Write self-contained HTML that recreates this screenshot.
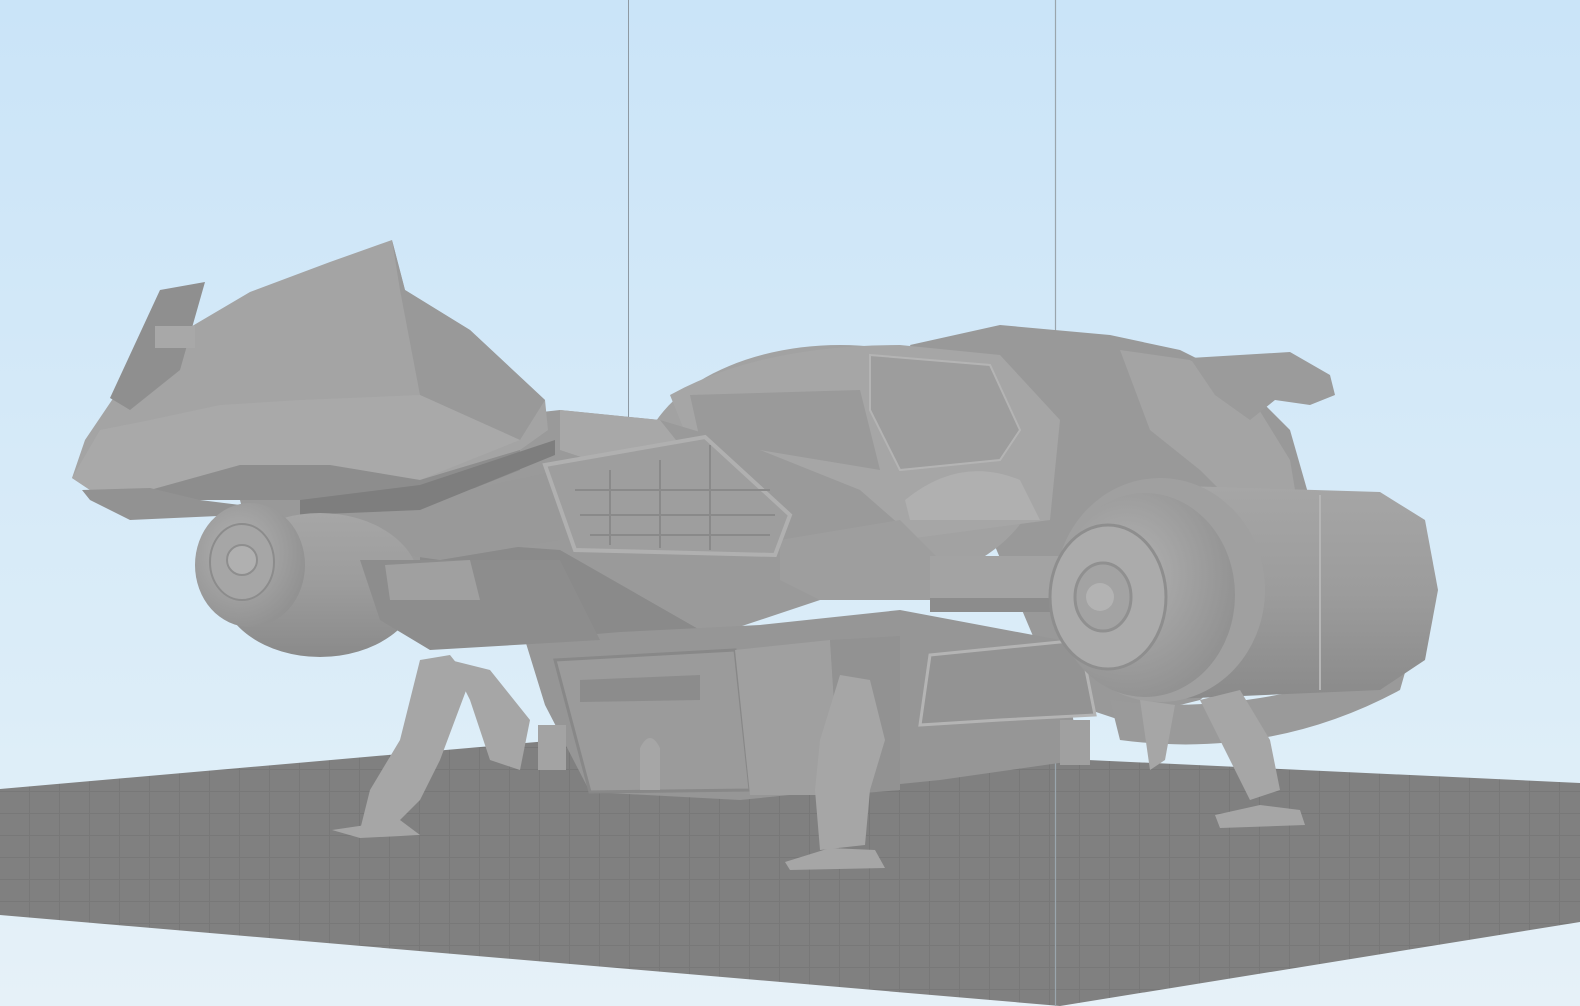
<!DOCTYPE html>
<html><head><meta charset="utf-8"><style>
html,body{margin:0;padding:0;width:1580px;height:1006px;overflow:hidden;background:#d5eaf8}
svg{display:block}
</style></head><body>
<svg width="1580" height="1006" viewBox="0 0 1580 1006" xmlns="http://www.w3.org/2000/svg">
<defs>
<linearGradient id="sky" x1="0" y1="0" x2="0" y2="1">
<stop offset="0" stop-color="#cae4f8"/><stop offset="0.7" stop-color="#dcedf8"/><stop offset="1" stop-color="#e6f1f8"/>
</linearGradient>
<pattern id="grid" width="30" height="22" patternUnits="userSpaceOnUse">
<rect width="30" height="22" fill="#808080"/><path d="M0 21.5H30M29.5 0V22" stroke="#787878" stroke-width="1"/>
</pattern>
<radialGradient id="eng" cx="0.4" cy="0.4" r="0.7"><stop offset="0" stop-color="#b2b2b2"/><stop offset="1" stop-color="#8e8e8e"/></radialGradient>
<linearGradient id="cyl" x1="0" y1="0" x2="0" y2="1"><stop offset="0" stop-color="#a6a6a6"/><stop offset="0.5" stop-color="#9c9c9c"/><stop offset="1" stop-color="#8a8a8a"/></linearGradient>
</defs>
<rect width="1580" height="1006" fill="url(#sky)"/>
<polygon points="0,789 594,737 1260,768 1580,783 1580,922 1060,1006 0,915" fill="url(#grid)"/>
<line x1="628.5" y1="0" x2="628.5" y2="760" stroke="#8e99a2" stroke-width="1"/>
<line x1="1055.5" y1="0" x2="1055.5" y2="1006" stroke="#9aa5ad" stroke-width="1.2"/>

<path d="M910,345 L1000,325 L1110,335 L1180,350 L1240,380 L1290,430 L1310,500 L1300,580 L1270,640 L1200,700 L1120,720 L1060,700 Z" fill="#999"/>
<path d="M1120,350 L1190,360 L1250,395 L1290,460 L1300,520 L1250,520 L1200,470 L1150,430 Z" fill="#a4a4a4"/>
<path d="M1190,358 L1290,352 L1330,375 L1335,395 L1310,405 L1275,400 L1250,420 L1215,395 Z" fill="#9b9b9b"/>
<path d="M1110,700 Q1250,720 1410,655 L1400,690 Q1270,760 1120,740 Z" fill="#9a9a9a"/>
<ellipse cx="840" cy="470" rx="200" ry="125" fill="#a2a2a2"/>
<path d="M670,395 Q760,345 900,345 L1000,355 L1060,420 L1050,520 L900,540 L700,470 Z" fill="#a6a6a6"/>
<path d="M870,355 L990,365 L1020,430 L1000,460 L900,470 L870,410 Z" fill="#9d9d9d" stroke="#b4b4b4" stroke-width="2"/>
<path d="M690,395 L860,390 L880,470 L700,440 Z" fill="#9a9a9a"/>
<path d="M905,500 Q960,455 1020,480 L1040,520 L910,520 Z" fill="#b0b0b0"/>

<polygon points="300,470 470,420 560,410 660,420 760,450 860,490 940,560 930,600 820,600 700,640 570,640 420,615 320,560" fill="#9a9a9a"/>
<polygon points="560,410 660,420 700,470 620,470 560,450" fill="#a8a8a8"/>
<polygon points="420,540 560,550 700,630 570,640 420,615" fill="#8a8a8a"/>
<polygon points="780,540 900,520 940,560 930,600 820,600 780,580" fill="#9e9e9e"/>
<rect x="930" y="556" width="130" height="52" fill="#a3a3a3"/>
<rect x="930" y="598" width="130" height="14" fill="#8c8c8c"/>

<polygon points="525,640 620,632 760,625 900,610 1060,640 1080,760 940,780 740,800 590,792 545,705" fill="#969696"/>
<polygon points="555,660 735,650 750,790 590,792" fill="#9b9b9b" stroke="#888" stroke-width="3"/>
<polygon points="580,680 700,675 700,700 580,702" fill="#8c8c8c"/>
<path d="M640,790 L640,748 Q650,728 660,748 L660,790 Z" fill="#a6a6a6"/>
<polygon points="735,650 830,640 840,795 750,795" fill="#a0a0a0"/>
<polygon points="830,640 900,636 900,790 840,795" fill="#929292"/>
<rect x="538" y="725" width="28" height="45" fill="#a3a3a3"/>
<rect x="1060" y="720" width="30" height="45" fill="#a0a0a0"/>

<polygon points="930,655 1080,640 1095,715 1000,720 920,725" fill="#939393" stroke="#b4b4b4" stroke-width="3"/>

<!-- nose -->
<polygon points="72,478 85,440 112,400 160,345 250,292 330,262 392,240 405,290 470,330 545,400 548,430 520,450 420,480 330,470 240,470 150,490 90,490" fill="#a4a4a4"/>
<polygon points="392,240 405,290 470,330 545,400 520,440 420,395 400,290" fill="#999"/>
<polygon points="72,478 100,430 150,420 220,405 300,400 420,395 520,440 420,480 330,470 240,470 150,490 90,490" fill="#a9a9a9"/>
<polygon points="150,490 240,465 330,465 420,480 520,450 520,470 420,510 300,500 200,500 150,500" fill="#8d8d8d"/>
<polygon points="240,500 420,500 560,470 560,540 440,560 300,540 245,520" fill="#999"/>
<polygon points="82,490 150,488 200,500 240,505 240,515 130,520 90,500" fill="#929292"/>
<polygon points="300,500 420,485 555,440 555,455 420,510 300,515" fill="#7e7e7e"/>
<polygon points="110,398 160,290 205,282 180,370 130,410" fill="#8f8f8f"/>
<rect x="155" y="326" width="40" height="22" fill="#a8a8a8"/>

<ellipse cx="320" cy="585" rx="100" ry="72" fill="url(#cyl)"/>
<ellipse cx="250" cy="565" rx="55" ry="62" fill="url(#eng)"/>
<ellipse cx="242" cy="562" rx="32" ry="38" fill="#a6a6a6" stroke="#8c8c8c" stroke-width="2"/>
<circle cx="242" cy="560" r="15" fill="#b0b0b0" stroke="#8e8e8e" stroke-width="2"/>
<polygon points="360,560 560,560 600,640 430,650 380,620" fill="#8d8d8d"/>
<polygon points="385,565 470,560 480,600 390,600" fill="#a0a0a0"/>

<polygon points="545,465 705,437 790,515 775,555 575,550" fill="#9e9e9e" stroke="#b0b0b0" stroke-width="4"/>
<path d="M575,490 H770 M580,515 H775 M590,535 H770 M610,470 V545 M660,460 V548 M710,445 V550" stroke="#8a8a8a" stroke-width="2" fill="none"/>

<polygon points="1150,485 1380,492 1425,520 1438,590 1425,660 1380,690 1150,700" fill="url(#cyl)"/>
<path d="M1320,495 L1320,690" stroke="#b5b5b5" stroke-width="2"/>
<ellipse cx="1160" cy="590" rx="105" ry="112" fill="#a0a0a0"/>
<ellipse cx="1145" cy="595" rx="90" ry="102" fill="url(#eng)"/>
<ellipse cx="1108" cy="597" rx="58" ry="72" fill="#ababab" stroke="#8e8e8e" stroke-width="3"/>
<ellipse cx="1103" cy="597" rx="28" ry="34" fill="#a3a3a3" stroke="#909090" stroke-width="3"/>
<circle cx="1100" cy="597" r="14" fill="#b3b3b3"/>

<g fill="#a6a6a6">
<polygon points="420,660 450,655 470,680 440,760 420,800 390,830 360,830 370,790 400,740"/>
<polygon points="450,660 490,670 530,720 520,770 490,760 470,700"/>
<polygon points="332,830 400,820 420,835 360,838"/>
<polygon points="840,675 870,680 885,740 870,790 865,845 820,850 815,790 820,740"/>
<polygon points="785,862 830,848 875,850 885,868 790,870"/>
<polygon points="1200,700 1240,690 1270,740 1280,790 1250,800 1230,760"/>
<polygon points="1140,700 1175,705 1165,760 1150,770"/>
<polygon points="1215,815 1260,805 1300,810 1305,825 1220,828"/>
</g>
</svg>
</body></html>
